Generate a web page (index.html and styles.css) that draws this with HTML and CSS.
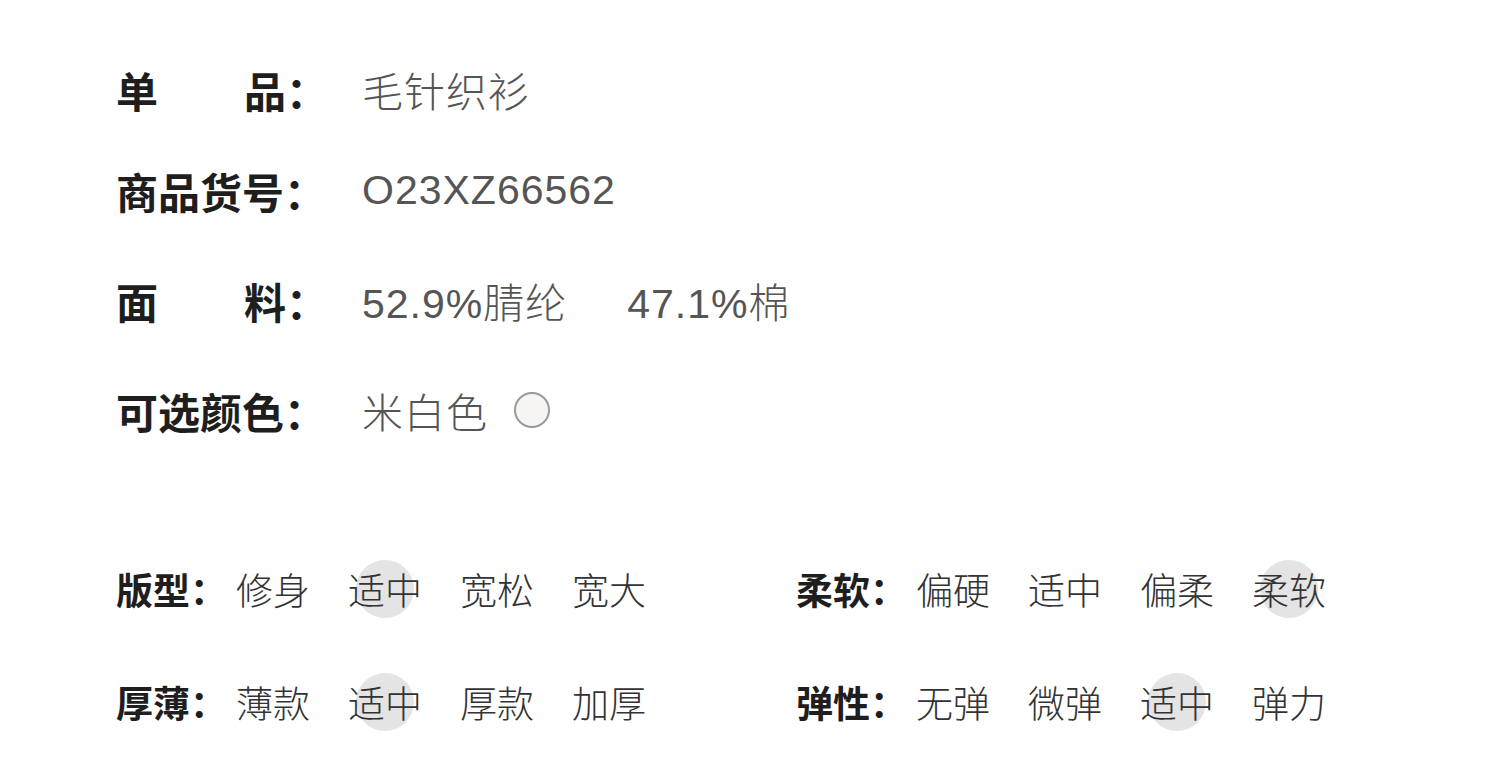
FILE: index.html
```html
<!DOCTYPE html>
<html lang="zh-CN">
<head>
    <meta charset="UTF-8">
    <meta name="viewport" content="width=device-width, initial-scale=1.0">
    <title>商品详情</title>
    <link rel="stylesheet" href="styles.css">
</head>
<body>
    <div class="page">
        <div class="info">
            <div class="info-row first">
                <div class="info-label spread"><span>单</span><span>品：</span></div>
                <div class="info-value">毛针织衫</div>
            </div>
            <div class="info-row">
                <div class="info-label">商品货号：</div>
                <div class="info-value">O23XZ66562</div>
            </div>
            <div class="info-row">
                <div class="info-label spread"><span>面</span><span>料：</span></div>
                <div class="info-value">
                    <span>52.9%腈纶</span>
                    <span class="part">47.1%棉</span>
                </div>
            </div>
            <div class="info-row">
                <div class="info-label">可选颜色：</div>
                <div class="info-value">
                    <span>米白色</span>
                    <span class="swatch"></span>
                </div>
            </div>
        </div>

        <div class="specs">
            <div class="spec-row">
                <div class="spec">
                    <div class="spec-label">版型：</div>
                    <span class="opt">修身</span>
                    <span class="opt active">适中</span>
                    <span class="opt">宽松</span>
                    <span class="opt">宽大</span>
                </div>
                <div class="spec">
                    <div class="spec-label">柔软：</div>
                    <span class="opt">偏硬</span>
                    <span class="opt">适中</span>
                    <span class="opt">偏柔</span>
                    <span class="opt active">柔软</span>
                </div>
            </div>
            <div class="spec-row">
                <div class="spec">
                    <div class="spec-label">厚薄：</div>
                    <span class="opt">薄款</span>
                    <span class="opt active">适中</span>
                    <span class="opt">厚款</span>
                    <span class="opt">加厚</span>
                </div>
                <div class="spec">
                    <div class="spec-label">弹性：</div>
                    <span class="opt">无弹</span>
                    <span class="opt">微弹</span>
                    <span class="opt active">适中</span>
                    <span class="opt">弹力</span>
                </div>
            </div>
        </div>
    </div>
</body>
</html>
```

FILE: styles.css
```css
body {
    margin: 0;
    padding: 0;
    background: #fff;
    font-family: "Noto Sans CJK SC", "Liberation Sans", sans-serif;
}
.page {
    padding: 59px 0 0 116px;
}
.info {
    display: flex;
    flex-direction: column;
    gap: 50px;
}
.info-row {
    display: flex;
    align-items: center;
    height: 60px;
}
.info-row.first {
    margin-bottom: -9px;
}
.info-label {
    width: 212px;
    font-size: 42px;
    font-weight: 700;
    color: #1e1e1e;
    white-space: nowrap;
}
.info-label.spread {
    display: flex;
    justify-content: space-between;
}
.info-value {
    display: flex;
    align-items: center;
    margin-left: 34px;
    font-family: "Liberation Sans", "Noto Sans CJK SC", sans-serif;
    font-size: 41px;
    font-weight: 300;
    letter-spacing: 1px;
    color: #555;
}
.part {
    margin-left: 60px;
}
.swatch {
    width: 32px;
    height: 32px;
    margin-left: 26px;
    border: 2px solid #9a9a9a;
    border-radius: 50%;
    background: #f6f5f3;
}
.specs {
    margin-top: 119px;
    display: flex;
    flex-direction: column;
    gap: 53px;
}
.spec-row {
    display: flex;
    height: 60px;
}
.spec {
    width: 680px;
    display: flex;
    align-items: center;
    gap: 38px;
    font-size: 37px;
}
.spec-label {
    width: 82px;
    font-weight: 700;
    color: #1e1e1e;
    white-space: nowrap;
}
.opt {
    position: relative;
    z-index: 0;
    font-weight: 300;
    color: #333;
}
.opt.active::before {
    content: "";
    position: absolute;
    z-index: -1;
    left: 50%;
    top: 50%;
    width: 58px;
    height: 58px;
    margin: -29px 0 0 -29px;
    border-radius: 50%;
    background: #e4e4e4;
}
```
